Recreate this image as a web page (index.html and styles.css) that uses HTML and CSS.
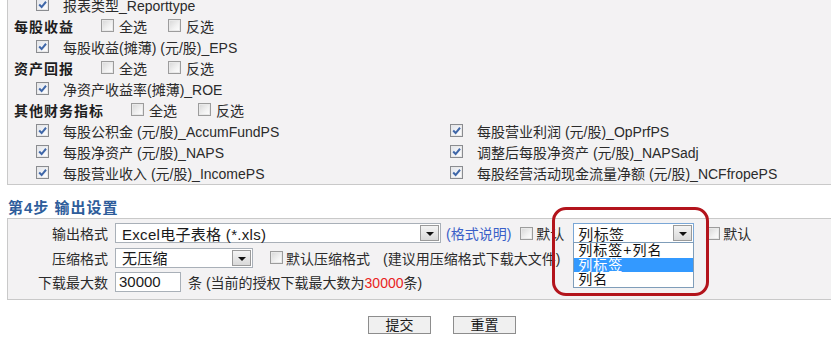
FILE: index.html
```html
<!DOCTYPE html>
<html lang="zh-CN">
<head>
<meta charset="utf-8">
<title>输出设置</title>
<link rel="stylesheet" href="styles.css">
</head>
<body>
<div class="panel fields">
  <div class="row item"><span class="cb on"><svg viewBox="0 0 10 10"><path d="M2 5 L4.2 7.3 L8.2 2.5" /></svg></span><span class="lbl">报表类型_Reporttype</span></div>
  <div class="row group"><b class="gname">每股收益</b><span class="cb"></span><span class="lbl sel">全选</span><span class="cb"></span><span class="lbl">反选</span></div>
  <div class="row item"><span class="cb on"><svg viewBox="0 0 10 10"><path d="M2 5 L4.2 7.3 L8.2 2.5" /></svg></span><span class="lbl">每股收益(摊薄) (元/股)_EPS</span></div>
  <div class="row group"><b class="gname">资产回报</b><span class="cb"></span><span class="lbl sel">全选</span><span class="cb"></span><span class="lbl">反选</span></div>
  <div class="row item"><span class="cb on"><svg viewBox="0 0 10 10"><path d="M2 5 L4.2 7.3 L8.2 2.5" /></svg></span><span class="lbl">净资产收益率(摊薄)_ROE</span></div>
  <div class="row group"><b class="gname">其他财务指标</b><span class="cb"></span><span class="lbl sel">全选</span><span class="cb"></span><span class="lbl">反选</span></div>
  <div class="grid2">
    <div class="row"><span class="cb on"><svg viewBox="0 0 10 10"><path d="M2 5 L4.2 7.3 L8.2 2.5" /></svg></span><span class="lbl">每股公积金 (元/股)_AccumFundPS</span></div>
    <div class="row"><span class="cb on"><svg viewBox="0 0 10 10"><path d="M2 5 L4.2 7.3 L8.2 2.5" /></svg></span><span class="lbl">每股营业利润 (元/股)_OpPrfPS</span></div>
    <div class="row"><span class="cb on"><svg viewBox="0 0 10 10"><path d="M2 5 L4.2 7.3 L8.2 2.5" /></svg></span><span class="lbl">每股净资产 (元/股)_NAPS</span></div>
    <div class="row"><span class="cb on"><svg viewBox="0 0 10 10"><path d="M2 5 L4.2 7.3 L8.2 2.5" /></svg></span><span class="lbl">调整后每股净资产 (元/股)_NAPSadj</span></div>
    <div class="row"><span class="cb on"><svg viewBox="0 0 10 10"><path d="M2 5 L4.2 7.3 L8.2 2.5" /></svg></span><span class="lbl">每股营业收入 (元/股)_IncomePS</span></div>
    <div class="row"><span class="cb on"><svg viewBox="0 0 10 10"><path d="M2 5 L4.2 7.3 L8.2 2.5" /></svg></span><span class="lbl">每股经营活动现金流量净额 (元/股)_NCFfropePS</span></div>
  </div>
</div>

<h3 class="step">第4步 输出设置</h3>

<div class="panel output">
  <div class="orow">
    <span class="olabel">输出格式</span>
    <div class="select w-format"><span class="stext">Excel电子表格 (*.xls)</span><span class="arrow"></span></div>
    <a class="link">(格式说明)</a>
    <span class="cb gap8"></span><span class="lbl2">默认</span>
    <div class="colsel">
      <div class="select w-col big open"><span class="stext">列标签</span><span class="arrow"></span></div>
      <ul class="dropdown">
        <li>列标签+列名</li>
        <li class="hl">列标签</li>
        <li>列名</li>
      </ul>
      <div class="annot"></div>
    </div>
    <span class="cb gap13"></span><span class="lbl2">默认</span>
  </div>
  <div class="orow">
    <span class="olabel">压缩格式</span>
    <div class="select w-zip"><span class="stext">无压缩</span><span class="arrow"></span></div>
    <span class="cb gap17"></span><span class="lbl2">默认压缩格式</span>
    <span class="hint">(建议用压缩格式下载大文件)</span>
  </div>
  <div class="orow">
    <span class="olabel">下载最大数</span>
    <span class="input">30000</span>
    <span class="note">条 (当前的授权下载最大数为<span class="red">30000</span>条)</span>
  </div>
</div>

<div class="buttons">
  <span class="btn">提交</span>
  <span class="btn">重置</span>
</div>
</body>
</html>
```

FILE: styles.css
```css
html, body {
  margin: 0;
  padding: 0;
  background: #ffffff;
  overflow: hidden;
}
body {
  font-family: "Liberation Sans", "Noto Sans CJK SC", sans-serif;
  font-size: 14px;
  color: #2b2b2b;
  width: 831px;
  height: 343px;
}

.panel {
  background: #f3f2f3;
  border: 1px solid #c9c9c9;
  border-right: none;
  margin-left: 7px;
}

.fields {
  margin-top: -8px;
  padding: 1px 0 1px 0;
}

.row {
  display: flex;
  align-items: center;
  height: 21px;
}
.item {
  padding-left: 28px;
}
.group {
  padding-left: 6px;
}
.gname {
  font-weight: bold;
  font-size: 14px;
  letter-spacing: 1px;
  color: #1e1e1e;
  margin-right: 27px;
}
.lbl {
  margin-left: 14px;
  white-space: nowrap;
}
.group .lbl {
  margin-left: 5px;
}
.group .lbl.sel {
  margin-right: 21px;
}

.grid2 {
  display: grid;
  grid-template-columns: 414px auto;
  padding-left: 28px;
}

/* checkbox */
.cb {
  display: inline-block;
  width: 11px;
  height: 11px;
  border: 1px solid #9c9c9c;
  background: linear-gradient(135deg, #d6d6d6 0%, #f2f2f2 60%, #ffffff 100%);
  box-shadow: inset 0 0 0 1px #e9e9e9;
  flex: none;
  position: relative;
}
.cb.on {
  border-color: #8a8c90;
  background: linear-gradient(135deg, #dfe3ea 0%, #f4f5f8 60%, #ffffff 100%);
}
.cb svg {
  position: absolute;
  left: 0;
  top: 0;
  width: 11px;
  height: 11px;
}
.cb svg path {
  fill: none;
  stroke: #3f67a8;
  stroke-width: 1.8;
}

.step {
  margin: 12px 0 0 8px;
  height: 21px;
  font-size: 15px;
  letter-spacing: 1px;
  font-weight: bold;
  color: #2e5d9b;
  line-height: 21px;
}

.output {
  margin-top: 0;
  padding: 2px 0 4px 0;
  font-size: 14px;
}
.orow {
  display: flex;
  align-items: center;
  height: 24.5px;
}
.olabel {
  width: 100px;
  text-align: right;
  margin-right: 7px;
  white-space: nowrap;
  color: #2b2b2b;
}

.select {
  box-sizing: border-box;
  height: 20px;
  background: #ffffff;
  border: 1px solid #a9b0b8;
  display: flex;
  align-items: center;
  position: relative;
  flex: none;
}
.stext {
  flex: 1;
  padding-left: 6px;
  white-space: nowrap;
  color: #1a1a1a;
  font-size: 15px;
  letter-spacing: 0.3px;
}
.arrow {
  width: 19px;
  height: 16px;
  margin-right: 1px;
  box-sizing: border-box;
  border: 1px solid #9a9a9a;
  background: linear-gradient(#f4f4f4, #d9d9d9);
  position: relative;
}
.arrow::after {
  content: "";
  position: absolute;
  left: 5px;
  top: 6px;
  border-left: 4px solid transparent;
  border-right: 4px solid transparent;
  border-top: 4px solid #111;
}
.w-format { width: 326px; }
.w-zip { width: 138px; }
.w-col { width: 121px; }
.big .stext { font-size: 15px; padding-left: 4px; }
.open { border-color: #7aa7d6; }

.link {
  color: #3a5fc8;
  margin-left: 5px;
  white-space: nowrap;
}
.gap8 { margin-left: 9px; }
.gap13 { margin-left: 13px; }
.gap17 { margin-left: 17px; }
.lbl2 {
  margin-left: 3px;
  white-space: nowrap;
}
.hint {
  margin-left: 13px;
  white-space: nowrap;
}

.colsel {
  position: relative;
  margin-left: 9px;
}
.dropdown {
  position: absolute;
  left: 0;
  top: 19px;
  width: 119px;
  margin: 0;
  padding: 0;
  list-style: none;
  background: #ffffff;
  border: 1px solid #7f9db9;
  font-size: 14px;
  letter-spacing: 1px;
  z-index: 2;
}
.dropdown li {
  height: 14.6px;
  line-height: 14.6px;
  padding-left: 4px;
  color: #111;
  white-space: nowrap;
  overflow: hidden;
}
.dropdown li.hl {
  background: #3399ff;
  color: #ffffff;
}
.annot {
  position: absolute;
  left: -21px;
  top: -16px;
  width: 151px;
  height: 83px;
  border: 3px solid #b3141c;
  border-radius: 14px;
  z-index: 3;
  pointer-events: none;
}

.input {
  box-sizing: border-box;
  width: 66px;
  height: 20px;
  border: 1px solid #a9b0b8;
  background: #ffffff;
  padding-left: 3px;
  line-height: 18px;
  font-size: 15px;
  color: #1a1a1a;
}
.note {
  margin-left: 7px;
  white-space: nowrap;
}
.red {
  color: #e8231d;
}

.buttons {
  display: flex;
  gap: 22px;
  padding-left: 368px;
  margin-top: 16px;
}
.btn {
  box-sizing: border-box;
  width: 63px;
  height: 18px;
  border: 1px solid #8d8d8d;
  background: #f0f0f0;
  text-align: center;
  line-height: 16px;
  font-size: 14px;
  color: #1a1a1a;
}
```
